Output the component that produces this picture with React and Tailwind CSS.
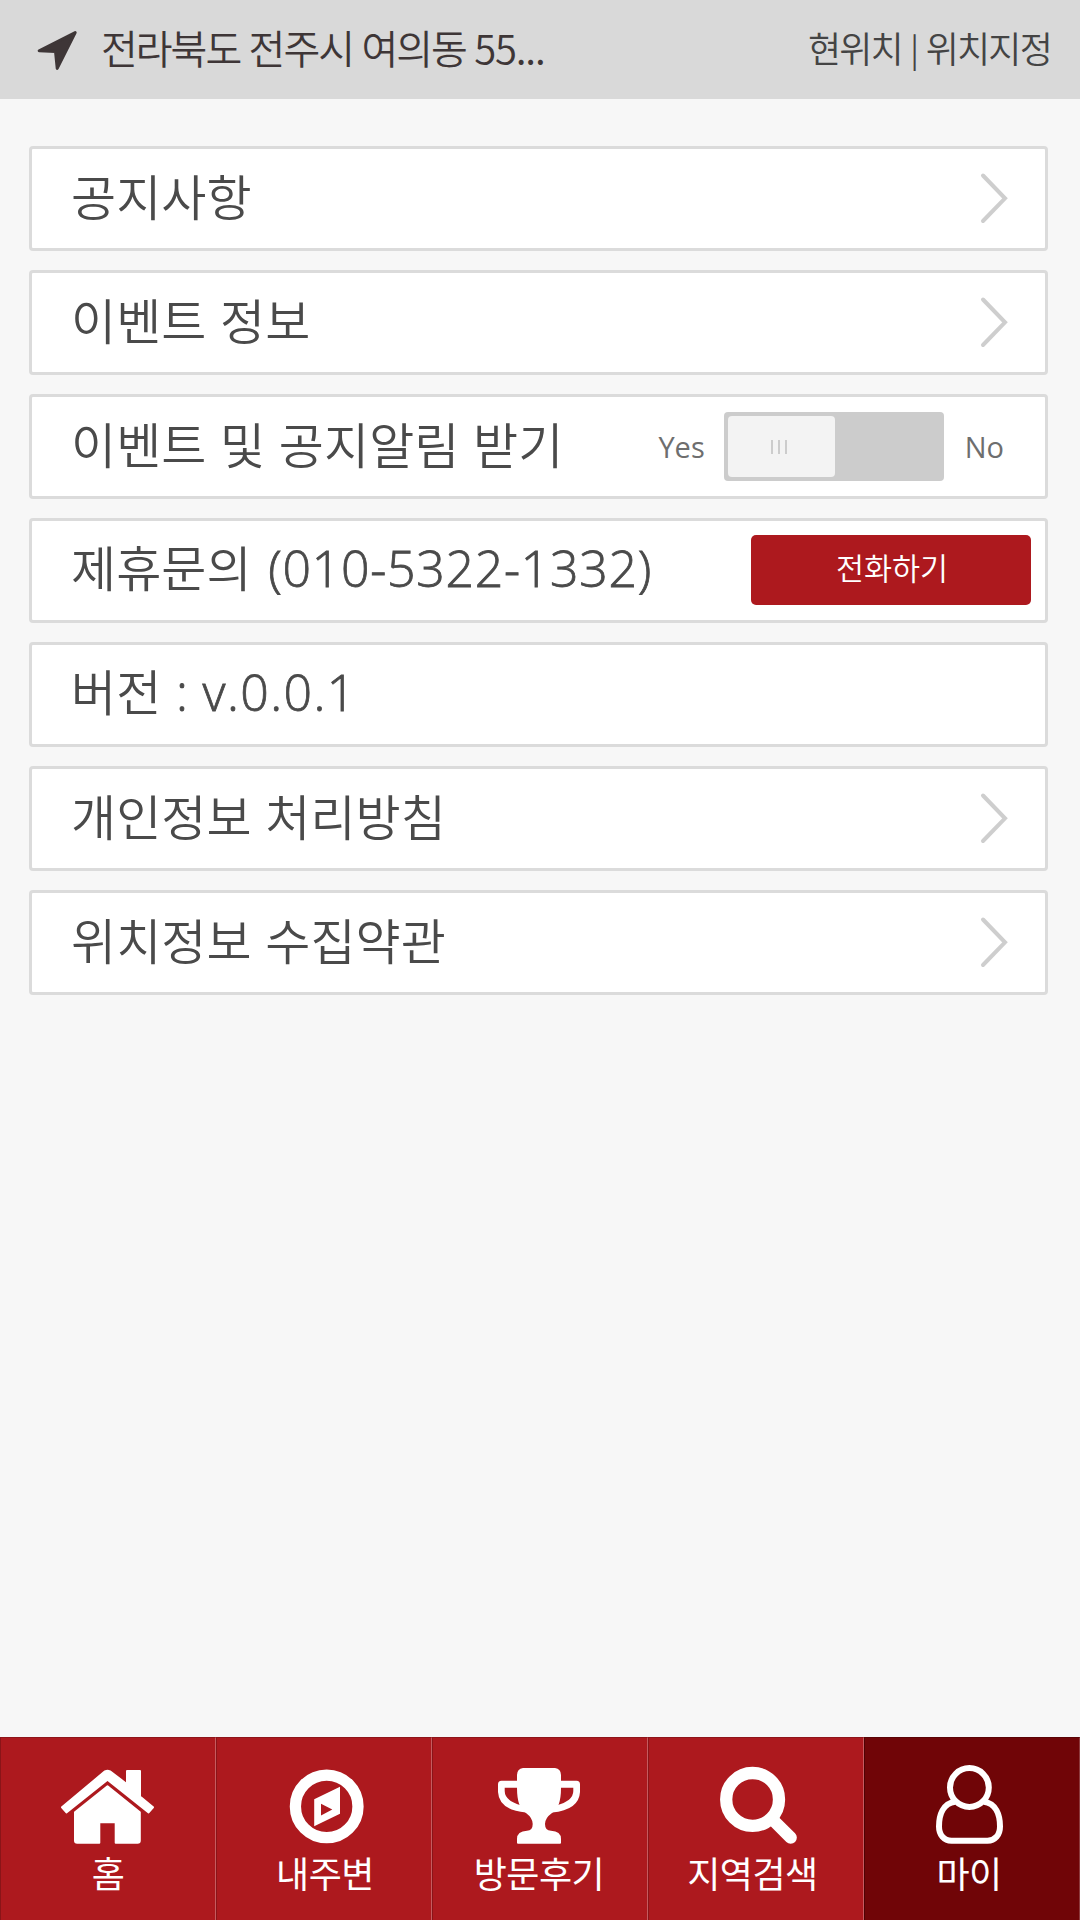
import React from 'react';
import clsx from 'clsx';

const LocationArrow = () => (
  <svg className="w-[44px] h-[44px] shrink-0" viewBox="0 0 44 44" fill="#3e3637" stroke="#3e3637" strokeWidth="3" strokeLinejoin="round">
    <path d="M40.2 4.5 L4.2 22.8 L20.5 23.4 L22.2 40.4 Z" />
  </svg>
);

const Chevron = () => (
  <svg className="w-7 h-[52px] mb-px shrink-0" viewBox="0 0 28 52" fill="none" stroke="#cecece" strokeWidth="4" strokeLinecap="round">
    <path d="M3 3.5 L25 26.3 L3 49" />
  </svg>
);

const HomeIcon = () => (
  <g fill="#fff" stroke="#fff" strokeWidth="2" strokeLinejoin="round">
    <path d="M47.5 15.6 L88.6 48.4 L93 43.3 L80 32.5 V7 H67 V20.2 L50 7.3 Q47.5 6 45 7.3 L2 43.3 L6.4 48.4 Z" />
    <path d="M47.5 22.3 L79.8 48.3 V76.5 Q79.8 78.7 77.6 78.7 H55.7 V58.3 H39.3 V78.7 H17.2 Q15 78.7 15 76.5 V48.3 Z" />
  </g>
);

const CompassIcon = () => (
  <g fill="none">
    <circle cx="50.7" cy="42.4" r="31.3" stroke="#fff" strokeWidth="11.3" />
    <path fill="#fff" fillRule="evenodd" d="M64 22.8 V49.8 L38.2 62.3 V35.2 Z M45 39.8 V51.4 L56.3 45.4 Z" />
  </g>
);

const TrophyIcon = () => (
  <g fill="#fff">
    <path d="M31 4 H63 Q69 5 69 11 V24 Q69 44 60 49 Q53 54 53 60 Q53 66.7 59 66.7 Q69 67 69 75 V78.5 Q69 79.7 68 79.7 H26 Q25 79.7 25 78.5 V75 Q25 67 35 66.7 Q40.7 66.7 40.7 60 Q40.7 54 34 49 Q25 44 25 24 V11 Q25 5 31 4 Z" />
    <path d="M27 16.7 H9.5 Q6 16.7 6 20.2 V28 Q7 46 34 48.5 L30 41.5 Q12.7 37 12.7 27 V23.7 H27 Z" />
    <path d="M67 16.7 H84.5 Q88 16.7 88 20.2 V28 Q87 46 60 48.5 L64 41.5 Q81.3 37 81.3 27 V23.7 H67 Z" />
  </g>
);

const SearchIcon = () => (
  <g fill="none" stroke="#fff" strokeWidth="12.3" strokeLinecap="round">
    <circle cx="44.6" cy="35.4" r="26.4" />
    <path d="M66 57 L82.7 73.6" />
  </g>
);

const UserIcon = () => (
  <g fill="none" stroke="#fff" strokeWidth="6">
    <circle cx="45.4" cy="23.5" r="19.4" />
    <path d="M31 37.8 C19 39.5 15 51 15 62.5 C15 71 20 76.7 27.5 76.7 H63.5 C71 76.7 76 71 76 62.5 C76 51 72 39.5 60 37.8" />
  </g>
);

const TABS = [
  { label: '홈', icon: HomeIcon },
  { label: '내주변', icon: CompassIcon, labelClass: 'pl-[2px]' },
  { label: '방문후기', icon: TrophyIcon, labelClass: 'pr-[2px]' },
  { label: '지역검색', icon: SearchIcon, labelClass: 'pr-[7px]' },
  { label: '마이', icon: UserIcon, labelClass: 'pr-[6px]', active: true },
];

const Row = ({ children, className }) => (
  <li className={clsx('flex items-center justify-between h-[105px] bg-white border-3 border-[#dbdbdb] rounded-[4px] pl-[39px]', className)}>
    {children}
  </li>
);

const Label = ({ children }) => (
  <span className="pb-[8px] text-[49px] leading-none font-[350] tracking-[0.1px] [word-spacing:2.5px] text-[#4a4a4a] whitespace-pre">
    {children}
  </span>
);

const Header = () => (
  <header className="flex items-center h-[99px] bg-[#d9d9d9] pl-[35px] pr-[29px]">
    <LocationArrow />
    <p className="ml-[22px] pb-[5px] flex-1 text-[40px] leading-none font-[350] tracking-[-2px] [word-spacing:1.5px] text-[#3e3637]">
      전라북도 전주시 여의동 <span className="tracking-[-1.2px]">55...</span>
    </p>
    <p className="pb-[6px] text-[36px] leading-none font-[350] tracking-[-1.8px] [word-spacing:2.2px] text-[#444444]">
      현위치 <span className="text-[33px] align-[1px]">|</span> 위치지정
    </p>
  </header>
);

const Toggle = () => (
  <div className="flex items-center font-['Open_Sans'] text-[29px] leading-none text-[#6e6e6e]">
    <span>Yes</span>
    <button className="w-[220px] h-[69px] ml-[19px] mr-[21px] p-1 bg-[#cccccc] rounded-[4px]">
      <span className="flex items-center justify-center gap-[5px] w-[107px] h-[61px] pr-[4px] bg-[#f3f3f3] rounded-[4px]">
        <i className="w-0.5 h-3.5 bg-[#cccccc]" />
        <i className="w-0.5 h-3.5 bg-[#cccccc]" />
        <i className="w-0.5 h-3.5 bg-[#cccccc]" />
      </span>
    </button>
    <span>No</span>
  </div>
);

const App = () => {
  return (
    <div className="flex flex-col w-[1080px] h-[1920px] bg-[#f7f7f7] font-['Noto_Sans_CJK_KR',sans-serif]">
      <Header />

      {/* Settings list */}
      <ul className="flex flex-col flex-1 gap-[19px] pt-[47px] pl-[29px] pr-8">
        <Row className="pr-[37px]">
          <Label>공지사항</Label>
          <Chevron />
        </Row>
        <Row className="pr-[37px]">
          <Label>이벤트 정보</Label>
          <Chevron />
        </Row>
        <Row className="pr-[41px]">
          <Label>이벤트 및 공지알림 받기</Label>
          <Toggle />
        </Row>
        <Row className="pr-[14px]">
          <Label>
            제휴문의 <span className="ml-[3px] font-['Open_Sans'] text-[50px] leading-none tracking-[0.7px] [-webkit-text-stroke:0.8px_#4a4a4a]">(010-5322-1332)</span>
          </Label>
          <button className="w-[280px] h-[70px] mb-px pb-[5px] pl-[2px] bg-[#ad191e] rounded-[5px] text-[30.5px] leading-none font-[350] text-white">
            전화하기
          </button>
        </Row>
        <Row>
          <Label>
            버전 <span className="ml-px font-['Open_Sans'] text-[50px] leading-none tracking-[1.4px] [word-spacing:-1px] [-webkit-text-stroke:0.8px_#4a4a4a]">: v.0.0.1</span>
          </Label>
        </Row>
        <Row className="pr-[37px]">
          <Label>개인정보 처리방침</Label>
          <Chevron />
        </Row>
        <Row className="pr-[37px]">
          <Label>위치정보 수집약관</Label>
          <Chevron />
        </Row>
      </ul>

      {/* Bottom tabs */}
      <nav className="grid grid-cols-5 h-[183px]">
        {TABS.map(({ label, icon: Icon, labelClass, active }) => (
          <a
            key={label}
            className={clsx(
              'flex flex-col items-center border-t border-l border-r pt-[26px]',
              active
                ? 'bg-[#700507] border-t-[#5a0406] border-l-[#4d0304] border-r-[#8d3a3c]'
                : 'bg-[#ad191e] border-t-[#8f151a] border-l-[#8a1418] border-r-[#c65b5f]'
            )}
          >
            <svg className="w-[96px] h-[80px]" viewBox="0 0 96 80">
              <Icon />
            </svg>
            <span className={clsx('mt-[10px] text-[36px] leading-none tracking-[-0.5px] text-white', labelClass)}>{label}</span>
          </a>
        ))}
      </nav>
    </div>
  );
};

export default App;
